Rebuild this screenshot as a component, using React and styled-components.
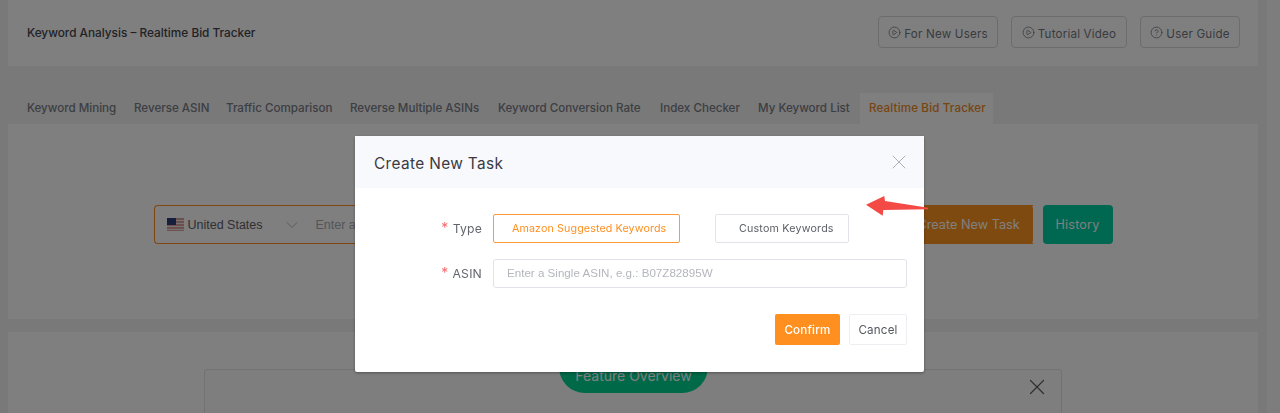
import styled, { createGlobalStyle } from "styled-components";
import { CirclePlay, CircleHelp, ChevronDown, X } from "lucide-react";

const GlobalStyle = createGlobalStyle`
    html, body {
        margin: 0;
        height: 413px;
        overflow: hidden;
        background: #f2f2f2;
        font-family: "Inter", "Liberation Sans", sans-serif;
    }
`;

const Shell = styled.div`
    display: flex;
    height: 413px;
    overflow: hidden;
`;

const Page = styled.div`
    flex: 1;
    min-width: 0;
    padding: 0 9px 0 8px;
    box-sizing: border-box;
`;

const ScrollTrack = styled.div`
    width: 13px;
    background: #fbfbfb;
`;

const HeaderCard = styled.header`
    height: 66px;
    background: #fff;
    padding: 16px 18px 0 19px;
    box-sizing: border-box;
    display: flex;
    justify-content: space-between;
    align-items: flex-start;
`;

const Title = styled.h1`
    margin: 9px 0 0;
    font-size: 11.8px;
    line-height: 17px;
    font-weight: 500;
    color: #44454c;
`;

const HeaderActions = styled.div`
    display: flex;
    gap: 13px;
`;

const GhostButton = styled.button`
    height: 32px;
    width: ${(p) => p.$width}px;
    display: flex;
    align-items: center;
    justify-content: center;
    gap: 3px;
    background: #fff;
    border: 1px solid #d8d8dc;
    border-radius: 4px;
    color: #74777f;
    font: 400 11.6px "Inter", sans-serif;
    letter-spacing: 0.2px;
    padding: 3px 0 0;
    svg {
        margin-top: -3px;
    }
`;

const Tabs = styled.nav`
    height: 58px;
    padding: 27px 0 0 10px;
    box-sizing: border-box;
    display: flex;
    align-items: stretch;
`;

const Tab = styled.div`
    width: ${(p) => p.$width}px;
    padding-left: 9px;
    box-sizing: border-box;
    height: 31px;
    line-height: 31px;
    font-size: 11.6px;
    font-weight: 500;
    white-space: nowrap;
    letter-spacing: ${(p) => (p.$active ? "0.15px" : "0")};
    color: ${(p) => (p.$active ? "#f08a1d" : "#7a7d87")};
    background: ${(p) => (p.$active ? "#fff" : "transparent")};
`;

const MainCard = styled.section`
    height: 195px;
    background: #fff;
    padding-top: 81px;
    box-sizing: border-box;
    display: flex;
    justify-content: center;
    align-items: flex-start;
    gap: 10px;
`;

const SearchBox = styled.div`
    width: 879px;
    height: 39px;
    box-sizing: border-box;
    display: flex;
    border: 1px solid #ff8f1f;
    border-radius: 4px 0 0 4px;
    border-right: 0;
    position: relative;
`;

const CountrySelect = styled.div`
    width: 161px;
    display: flex;
    align-items: center;
    padding-left: 12px;
    box-sizing: border-box;
    gap: 4px;
    color: #5e6068;
    font: 400 12.5px "Liberation Sans", sans-serif;
    svg:last-child {
        margin-left: 15px;
        color: #a6a8b0;
    }
`;

const Placeholder = styled.span`
    align-self: center;
    color: #a8aab2;
    font: 400 12.5px "Liberation Sans", sans-serif;
`;

const CreateButton = styled.div`
    position: absolute;
    top: -1px;
    right: 0;
    width: 115px;
    height: 39px;
    background: #ff9420;
    border-radius: 0 4px 4px 0;
    color: #fff;
    font-size: 12.7px;
    line-height: 39px;
`;

const HistoryButton = styled.button`
    width: 70px;
    height: 39px;
    border: 0;
    border-radius: 4px;
    background: #00cea0;
    color: #fff;
    font: 400 12.6px "Inter", sans-serif;
    letter-spacing: 0.2px;
    padding: 0;
`;

const LowerCard = styled.section`
    margin-top: 13px;
    height: 120px;
    background: #fff;
    padding: 37px 196px 0;
    box-sizing: border-box;
    position: relative;
`;

const Notice = styled.div`
    height: 100px;
    box-sizing: border-box;
    background: #fcfcfc;
    border: 1px solid #e4e4e8;
    border-radius: 3px;
    display: flex;
    justify-content: flex-end;
    padding: 4px 11px 0 0;
    color: #5e5e62;
`;

const OverviewPill = styled.div`
    position: absolute;
    left: 551px;
    top: 0;
    width: 149px;
    height: 61px;
    border-radius: 0 0 26px 26px;
    background: #00d290;
    color: #fff;
    display: flex;
    align-items: flex-end;
    justify-content: center;
    padding-bottom: 9px;
    box-sizing: border-box;
    font-size: 14px;
`;

const Overlay = styled.div`
    position: fixed;
    inset: 0;
    background: rgba(0, 0, 0, 0.5);
    display: flex;
    justify-content: center;
    align-items: flex-start;
    padding: 136px 1px 0 0;
`;

const Modal = styled.div`
    width: 569px;
    height: 236px;
    background: #fff;
    box-shadow: 0 1px 3px rgba(0, 0, 0, 0.35);
    position: relative;
    border-radius: 2px;
`;

const ModalHeader = styled.div`
    height: 52px;
    background: #f8f9fd;
    padding: 0 13px 0 19px;
    display: flex;
    align-items: center;
    justify-content: space-between;
    color: #9a9ca5;
`;

const ModalTitle = styled.h2`
    margin: 2px 0 0;
    font-size: 15.4px;
    font-weight: 400;
    color: #3a3b42;
    letter-spacing: 0.35px;
`;

const ModalBody = styled.div`
    padding: 26px 17px 0 0;
    display: flex;
    flex-direction: column;
`;

const FormRow = styled.div`
    display: flex;
    align-items: center;
    height: 29px;
    margin-bottom: 16px;
`;

const Label = styled.label`
    width: 127px;
    margin-right: 11px;
    margin-top: -2px;
    text-align: right;
    color: #64666e;
    font-size: 12.2px;
    letter-spacing: 0.2px;
    &::before {
        content: "* ";
        color: #f56c6c;
        font-size: 14px;
    }
`;

const RadioCard = styled.div`
    height: 29px;
    width: ${(p) => p.$width}px;
    margin-right: 35px;
    box-sizing: border-box;
    border: 1px solid ${(p) => (p.$active ? "#ff9a36" : "#e2e3ea")};
    border-radius: 2px;
    color: ${(p) => (p.$active ? "#ff8f1f" : "#5e6068")};
    font-size: 10.7px;
    letter-spacing: ${(p) => (p.$active ? "0.12px" : "0.2px")};
    line-height: 27px;
    padding-left: ${(p) => p.$indent}px;
    white-space: nowrap;
`;

const TextField = styled.div`
    width: 414px;
    height: 29px;
    box-sizing: border-box;
    border: 1px solid #e2e3ea;
    border-radius: 3px;
    padding-left: 13px;
    color: #b4b6bd;
    font: 400 11.6px/26px "Liberation Sans", sans-serif;
`;

const ModalFooter = styled.div`
    display: flex;
    justify-content: flex-end;
    gap: 9px;
    margin-top: 10px;
`;

const PrimaryButton = styled.button`
    width: 65px;
    height: 31px;
    border: 0;
    border-radius: 2px;
    background: #ff8f1f;
    color: #fff;
    font: 500 11.6px "Inter", sans-serif;
    letter-spacing: 0.2px;
    padding: 0;
`;

const CancelButton = styled.button`
    width: 58px;
    height: 31px;
    box-sizing: border-box;
    background: #fff;
    border: 1px solid #eeeef2;
    border-radius: 2px;
    color: #55575f;
    font: 400 11.6px "Inter", sans-serif;
    letter-spacing: 0.2px;
    padding: 0;
`;

const Arrow = styled.svg`
    position: absolute;
    left: 511px;
    top: 60px;
`;

const tabs = [
    { label: "Keyword Mining", width: 107 },
    { label: "Reverse ASIN", width: 92 },
    { label: "Traffic Comparison", width: 124 },
    { label: "Reverse Multiple ASINs", width: 148 },
    { label: "Keyword Conversion Rate", width: 162 },
    { label: "Index Checker", width: 98 },
    { label: "My Keyword List", width: 111 },
];

function UsFlag() {
    return (
        <svg width="17" height="13" viewBox="0 0 17 13">
            <rect width="17" height="13" fill="#d9a0a0" />
            <rect y="2" width="17" height="1" fill="#f4e6e6" />
            <rect y="5" width="17" height="1" fill="#f4e6e6" />
            <rect y="8" width="17" height="1" fill="#f4e6e6" />
            <rect y="11" width="17" height="1" fill="#f4e6e6" />
            <rect width="9" height="7" fill="#2c3f78" />
        </svg>
    );
}

function App() {
    return (
        <>
            <GlobalStyle />
            <Shell>
                <Page>
                    <HeaderCard>
                        <Title>Keyword Analysis – Realtime Bid Tracker</Title>
                        <HeaderActions>
                            <GhostButton $width={120}><CirclePlay size={13} strokeWidth={1.5} />For New Users</GhostButton>
                            <GhostButton $width={116}><CirclePlay size={13} strokeWidth={1.5} />Tutorial Video</GhostButton>
                            <GhostButton $width={100}><CircleHelp size={13} strokeWidth={1.5} />User Guide</GhostButton>
                        </HeaderActions>
                    </HeaderCard>
                    <Tabs>
                        {tabs.map((t) => <Tab key={t.label} $width={t.width}>{t.label}</Tab>)}
                        <Tab $active $width={133}>Realtime Bid Tracker</Tab>
                    </Tabs>
                    <MainCard>
                        <SearchBox>
                            <CountrySelect>
                                <UsFlag />
                                United States
                                <ChevronDown size={20} strokeWidth={1} />
                            </CountrySelect>
                            <Placeholder>Enter a Single ASIN</Placeholder>
                            <CreateButton>Create New Task</CreateButton>
                        </SearchBox>
                        <HistoryButton>History</HistoryButton>
                    </MainCard>
                    <LowerCard>
                        <Notice><X size={26} strokeWidth={1.1} /></Notice>
                        <OverviewPill>Feature Overview</OverviewPill>
                    </LowerCard>
                </Page>
                <ScrollTrack />
            </Shell>
            <Overlay>
                <Modal>
                    <ModalHeader>
                        <ModalTitle>Create New Task</ModalTitle>
                        <X size={24} strokeWidth={0.8} />
                    </ModalHeader>
                    <ModalBody>
                        <FormRow>
                            <Label>Type</Label>
                            <RadioCard $active $width={187} $indent={18}>Amazon Suggested Keywords</RadioCard>
                            <RadioCard $width={134} $indent={23}>Custom Keywords</RadioCard>
                        </FormRow>
                        <FormRow>
                            <Label>ASIN</Label>
                            <TextField>Enter a Single ASIN, e.g.: B07Z82895W</TextField>
                        </FormRow>
                        <ModalFooter>
                            <PrimaryButton>Confirm</PrimaryButton>
                            <CancelButton>Cancel</CancelButton>
                        </ModalFooter>
                    </ModalBody>
                    <Arrow width="64" height="22" viewBox="0 0 64 22">
                        <path d="M0 8.7 L18.3 0 L19 5 L62 11.7 L62 13.3 L17.3 14 L16.7 19.7 Z" fill="#f44a46" />
                    </Arrow>
                </Modal>
            </Overlay>
        </>
    );
}

export default App;
